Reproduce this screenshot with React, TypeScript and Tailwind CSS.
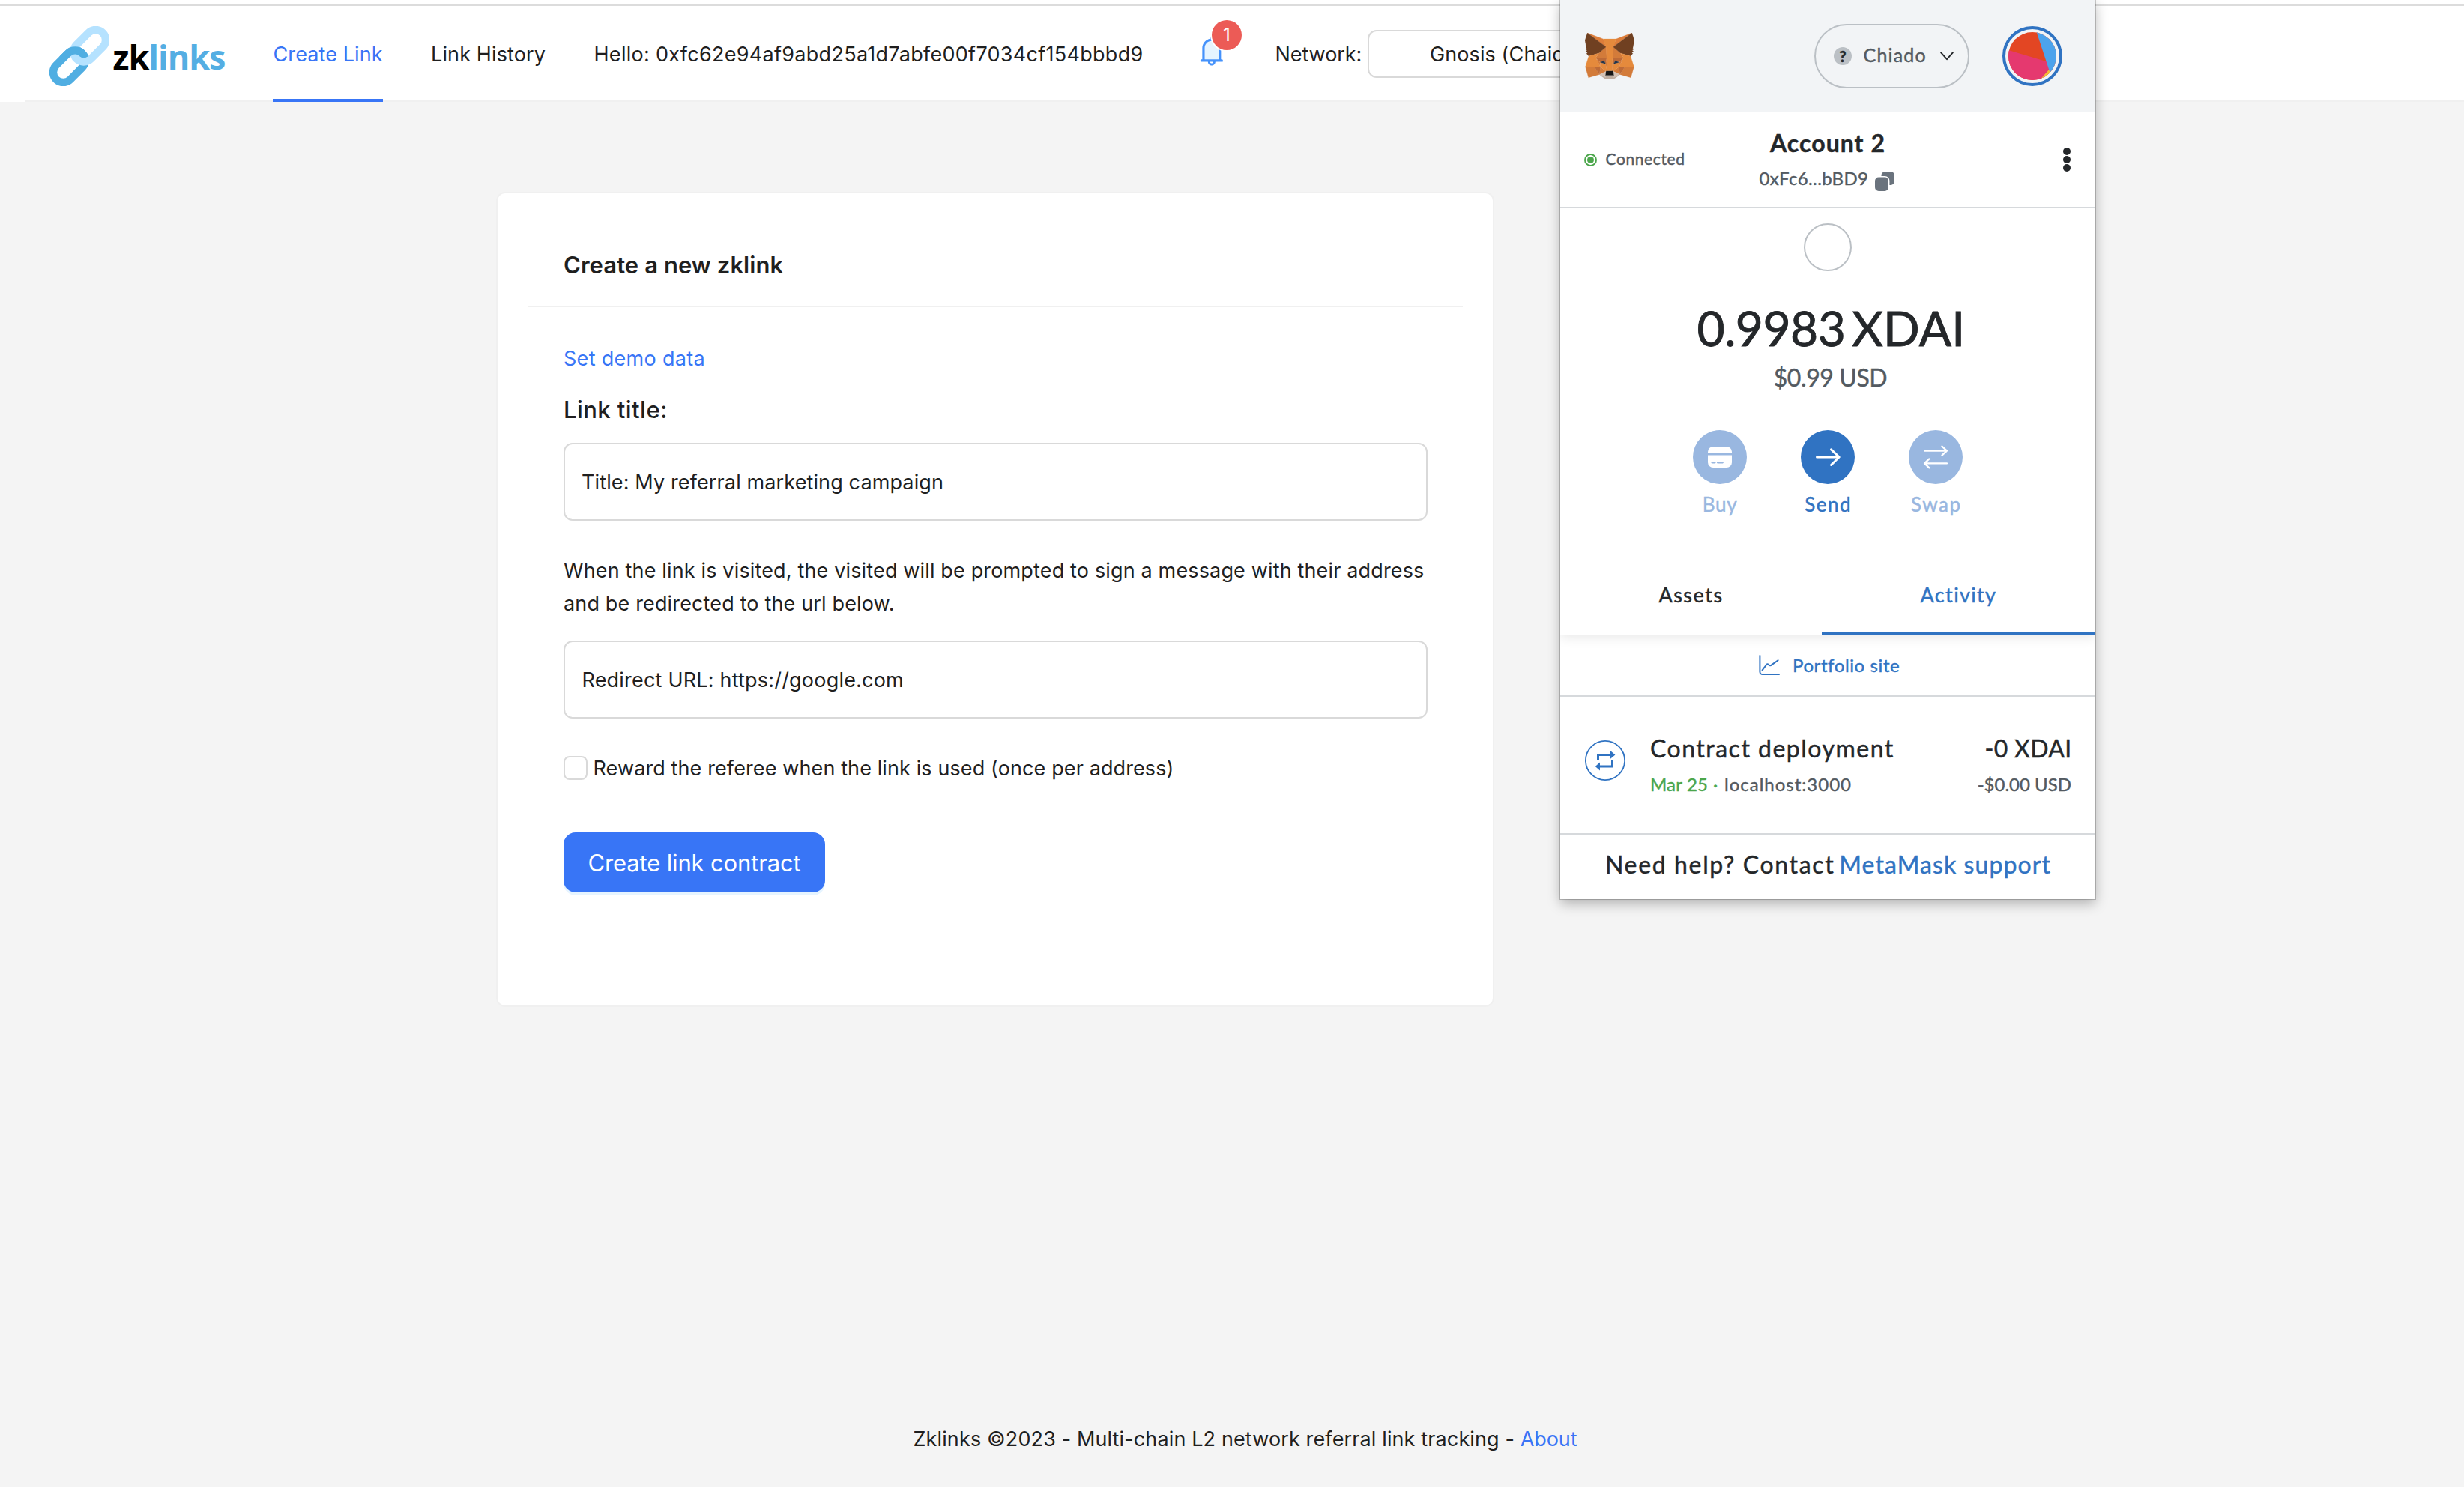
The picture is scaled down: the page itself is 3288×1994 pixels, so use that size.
const foxShapes: [string, string][] = [
  ['#dd7d3a', '274.1,35.5 174.6,109.4 193,65.8'],
  ['#dd7d3a', '44.4,35.5 143.1,110.1 125.6,65.8'],
  ['#d37b3a', '238.3,206.8 211.8,247.4 268.5,263 284.8,207.7'],
  ['#d37b3a', '33.9,207.7 50.1,263 106.8,247.4 80.3,206.8'],
  ['#d37b3a', '103.6,138.2 87.8,162.1 144.1,164.6 142.1,104.1'],
  ['#d37b3a', '214.9,138.2 175.9,103.4 174.6,164.6 230.8,162.1'],
  ['#d37b3a', '106.8,247.4 140.6,230.9 111.4,208.1'],
  ['#d37b3a', '177.9,230.9 211.8,247.4 207.1,208.1'],
  ['#d4c2b5', '211.8,247.4 177.9,230.9 180.6,253 180.3,262.3'],
  ['#d4c2b5', '106.8,247.4 138.3,262.3 138.1,253 140.6,230.9'],
  ['#bd6a37', '106.8,247.4 111.6,206.8 80.3,207.7'],
  ['#bd6a37', '207,206.8 211.8,247.4 238.3,207.7'],
  ['#bd6a37', '230.8,162.1 174.6,164.6 179.8,193.5 188.1,176.1 208.1,185.2'],
  ['#bd6a37', '110.6,185.2 130.6,176.1 138.8,193.5 144.1,164.6 87.8,162.1'],
  ['#d37b3a', '87.8,162.1 111.4,208.1 110.6,185.2'],
  ['#d37b3a', '208.1,185.2 207.1,208.1 230.8,162.1'],
  ['#d37b3a', '144.1,164.6 138.8,193.5 145.4,227.6 146.9,182.7'],
  ['#d37b3a', '174.6,164.6 171.9,182.6 173.1,227.6 179.8,193.5'],
  ['#e58a3c', '179.8,193.5 173.1,227.6 177.9,230.9 207.1,208.1 208.1,185.2'],
  ['#e58a3c', '110.6,185.2 111.4,208.1 140.6,230.9 145.4,227.6 138.8,193.5'],
  ['#283447', '138.8,193.5 110.6,185.2 130.5,176.1'],
  ['#283447', '179.7,193.5 188,176.1 208,185.2'],
  ['#beada0', '180.3,262.3 180.6,253 178.1,250.8 140.4,250.8 138.1,253 138.3,262.3 106.8,247.4 117.8,256.4 140.1,271.9 178.4,271.9 200.8,256.4 211.8,247.4'],
  ['#161616', '177.9,230.9 173.1,227.6 145.4,227.6 140.6,230.9 138.1,253 140.4,250.8 178.1,250.8 180.6,253'],
  ['#704021', '278.3,114.2 286.8,73.4 274.1,35.5 177.9,106.9 214.9,138.2 267.2,153.5 278.8,140 273.8,136.4 281.8,129.1 275.6,124.3 283.6,118.2'],
  ['#704021', '31.8,73.4 40.3,114.2 34.9,118.2 42.9,124.3 36.8,129.1 44.8,136.4 39.8,140 51.3,153.5 103.6,138.2 140.6,106.9 44.4,35.5'],
  ['#e58a3c', '267.2,153.5 214.9,138.2 230.8,162.1 207.1,208.1 238.3,207.7 284.8,207.7'],
  ['#e58a3c', '103.6,138.2 51.3,153.5 33.9,207.7 80.3,207.7 111.4,208.1 87.8,162.1'],
  ['#e58a3c', '174.6,164.6 177.9,106.9 193.1,65.8 125.6,65.8 140.6,106.9 144.1,164.6 145.3,182.8 145.4,227.6 173.1,227.6 173.3,182.8'],
];

function Fox() {
  return (
    <svg width="66" height="62" viewBox="31.8 35.5 255 236.4" preserveAspectRatio="none">
      {foxShapes.map(([fill, points]) => (
        <polygon key={points} points={points} fill={fill} stroke={fill} strokeWidth="0.8" strokeLinejoin="round" />
      ))}
    </svg>
  );
}

function LinkLogo() {
  return (
    <svg className="mt-[27px] shrink-0" width="80" height="80" viewBox="0 0 80 80" fill="none">
      <clipPath id="over">
        <rect x="0" y="0" width="80" height="40.5" />
      </clipPath>
      <g strokeWidth="10.4">
        <rect x="-24.6" y="-13.4" width="49.2" height="26.8" rx="13.4" transform="translate(26.3 53.7) rotate(-45)" stroke="#50aee2" />
        <rect x="-24.6" y="-13.4" width="49.2" height="26.8" rx="13.4" transform="translate(53.7 26.3) rotate(-45)" stroke="#b5e2ff" />
        <g clipPath="url(#over)">
          <rect x="-24.6" y="-13.4" width="49.2" height="26.8" rx="13.4" transform="translate(26.3 53.7) rotate(-45)" stroke="#50aee2" />
        </g>
      </g>
    </svg>
  );
}

function Bell() {
  return (
    <svg className="absolute -left-[8px] top-[36.5px]" width="45.7" height="45.7" viewBox="0 0 1024 1024">
      <path fill="#e6f4ff" d="M512 220c-55.6 0-107.8 21.6-147.1 60.9S304 372.4 304 428v340h416V428c0-55.6-21.6-107.8-60.9-147.1S567.6 220 512 220z" />
      <path
        fill="#4592fb"
        d="M816 768h-24V428c0-141.1-104.3-257.7-240-277.1V112c0-22.1-17.9-40-40-40s-40 17.9-40 40v38.9c-135.7 19.4-240 136-240 277.1v340h-24c-17.7 0-32 14.3-32 32v32c0 4.4 3.6 8 8 8h216c0 61.8 50.2 112 112 112s112-50.2 112-112h216c4.4 0 8-3.6 8-8v-32c0-17.7-14.3-32-32-32zM512 888c-26.5 0-48-21.5-48-48h96c0 26.5-21.5 48-48 48zm208-120H304V428c0-55.6 21.6-107.8 60.9-147.1S456.4 220 512 220c55.6 0 107.8 21.6 147.1 60.9S720 372.4 720 428v340z"
      />
    </svg>
  );
}

function Header() {
  return (
    <header className="flex h-32 shrink-0 bg-white text-[27px] leading-[33px] text-[#1f1f1f]">
      <div className="w-[34px] shrink-0" />
      <div className="flex grow border-b-2 border-[#f0f0f0]">
        <div className="ml-8 flex w-[298px] shrink-0">
          <LinkLogo />
          <div className="ml-[4.5px] mt-[37px] whitespace-nowrap font-['Open_Sans'] text-[45px] font-bold leading-[61px] tracking-[-1.05px] text-[#54aee3]">
            <span className="text-black">zk</span>links
          </div>
        </div>
        <a className="-mb-0.5 w-[147px] shrink-0 whitespace-nowrap border-b-4 border-[#3875f6] pl-[0.5px] pt-12 tracking-[0.1px] text-[#3875f6]">Create Link</a>
        <a className="ml-[64px] w-[154px] shrink-0 whitespace-nowrap pt-12 tracking-[0.13px]">Link History</a>
        <span className="ml-[63.5px] w-[735px] shrink-0 whitespace-nowrap pt-12 tracking-[0.286px]">
          Hello: 0xfc62e94af9abd25a1d7abfe00f7034cf154bbbd9
        </span>
        <div className="relative ml-[74.5px] w-[30px] shrink-0">
          <Bell />
          <span className="absolute left-[15px] top-[19px] flex size-10 items-center justify-center rounded-full bg-[#ec5b56] text-[24px] leading-6 text-white ring-2 ring-white">
            1
          </span>
        </div>
        <span className="ml-[69.5px] w-[120px] shrink-0 whitespace-nowrap pt-12 tracking-[-0.07px]">Network:</span>
        <div className="ml-[3.5px] mt-8 h-16 w-[400px] shrink-0 rounded-xl border-2 border-[#d9d9d9] pl-[81px] pt-[14px] tracking-[0.1px]">
          Gnosis (Chaido)
        </div>
      </div>
    </header>
  );
}

function LinkForm() {
  return (
    <section className="ml-[662px] mt-[120px] h-[1088px] w-[1332px] rounded-xl border-2 border-[#f0f0f0] bg-white px-10 pt-[77px]">
      <div className="border-b-2 border-[#f0f0f0] pb-9 pl-12">
        <h1 className="text-[31px] font-semibold leading-[37px] tracking-[0.065px]">Create a new zklink</h1>
      </div>
      <div className="w-[1201px] pl-12 pt-[52px] text-[27px] leading-[33px]">
        <a className="block tracking-[0.3px] text-[#3875f6]">Set demo data</a>
        <h2 className="mt-[33px] text-[31px] font-medium leading-[37px] tracking-[0.45px]">Link title:</h2>
        <div className="mt-[26px] flex h-[104px] items-center rounded-xl border-2 border-[#d9d9d9] pl-[22px] tracking-[0.123px]">
          Title: My referral marketing campaign
        </div>
        <p className="mt-[45px] whitespace-nowrap leading-[44px] tracking-[0.15px]">
          When the link is visited, the visited will be prompted to sign a message with their address
          <br />
          and be redirected to the url below.
        </p>
        <div className="mt-[27px] flex h-[104px] items-center rounded-xl border-2 border-[#d9d9d9] pl-[22.5px] tracking-[0.2px]">
          Redirect URL: https://google.com
        </div>
        <label className="mt-[50px] flex h-8 gap-[7.5px]">
          <span className="size-8 shrink-0 rounded-lg border-2 border-[#d9d9d9]" />
          <span className="whitespace-nowrap tracking-[0.11px]">Reward the referee when the link is used (once per address)</span>
        </label>
        <button className="mt-[70px] flex h-20 w-[349px] items-center justify-center rounded-2xl bg-[#3875f6] text-[31px] leading-[37px] tracking-[-0.148px] text-white shadow-[0_4px_0_rgba(5,145,255,0.1)]">
          Create link contract
        </button>
      </div>
    </section>
  );
}

function WalletHeader() {
  return (
    <div className="flex h-[150px] shrink-0 items-center bg-[#f2f4f6] pl-[33px]">
      <Fox />
      <div className="ml-[240px] flex h-[86px] w-[207px] items-center rounded-full border-2 border-[#bbc0c5] pl-6">
        <span className="flex size-6 items-center justify-center rounded-full bg-[#bbc0c5] text-[20px] font-black leading-6 text-[#24272a]">?</span>
        <span className="mb-1 ml-[15.5px] text-[25px] leading-[30px] tracking-[1.18px] text-[#535a61]">Chiado</span>
        <svg className="ml-[18px]" width="18" height="12" viewBox="0 0 18 12" fill="none" stroke="#24272a" strokeWidth="1.9" strokeLinecap="round" strokeLinejoin="round">
          <path d="M1.2 1.4 9 10.2l7.8-8.8" />
        </svg>
      </div>
      <div className="ml-[44px] flex size-20 items-center justify-center rounded-full border-4 border-[#3073c2]">
        <svg width="64" height="64" viewBox="0 0 64 64">
          <clipPath id="avatar">
            <circle cx="32" cy="32" r="32" />
          </clipPath>
          <g clipPath="url(#avatar)">
            <rect width="64" height="64" fill="#e34623" />
            <path d="M0 24 52 39.5 64 64H0Z" fill="#e5396f" />
            <path d="M55 49 40 66h24Z" fill="#f3be35" />
            <path d="M37 -2 55.5 54 66 52V-2Z" fill="#4ca3ec" />
          </g>
        </svg>
      </div>
    </div>
  );
}

function AccountBar() {
  return (
    <div className="grid h-32 shrink-0 grid-cols-[1fr_auto_1fr] border-b-2 border-[#d6d9dc]">
      <div className="flex items-center pl-[31.5px]">
        <span className="flex size-[17px] items-center justify-center rounded-full border-2 border-[#4ca64c]">
          <span className="size-[9px] rounded-full bg-[#4ca64c]" />
        </span>
        <span className="mb-[3px] ml-[12px] text-[21px] leading-[25px] tracking-[0.6px] text-[#535a61]">Connected</span>
      </div>
      <div className="flex flex-col items-center pt-[21px]">
        <span className="text-[32px] font-bold leading-[39px] tracking-[1.05px] text-[#24272a]">Account 2</span>
        <div className="mr-[2px] mt-[13px] flex">
          <span className="text-[24px] leading-[29px] tracking-[0.36px] text-[#535a61]">0xFc6...bBD9</span>
          <svg className="ml-[9px] mt-[6px]" width="26" height="26" viewBox="0 0 26 26" fill="#6a737d">
            <rect x="8.5" y="0" width="17.5" height="18" rx="5" />
            <rect x="-1.6" y="6" width="21" height="21.5" rx="6" fill="#ffffff" />
            <rect x="0" y="7.6" width="18" height="18.4" rx="5" />
          </svg>
        </div>
      </div>
      <div className="flex flex-col items-end justify-center gap-[1.6px] pr-[33px]">
        <span className="size-[9.6px] rounded-full bg-[#24272a]" />
        <span className="size-[9.6px] rounded-full bg-[#24272a]" />
        <span className="size-[9.6px] rounded-full bg-[#24272a]" />
      </div>
    </div>
  );
}

function Actions() {
  return (
    <div className="mt-[51px] flex gap-[72px] text-[26px] leading-8 text-[#99b7e0]">
      <div className="flex w-[72px] flex-col items-center gap-[11px]">
        <svg width="72" height="72" viewBox="0 0 72 72">
          <circle cx="36" cy="36" r="36" fill="#99b7e0" />
          <path d="M20 31v-2a7 7 0 0 1 7-7h18a7 7 0 0 1 7 7v2Z" fill="#fff" />
          <path d="M20 33.4h32V43a7 7 0 0 1-7 7H27a7 7 0 0 1-7-7Z" fill="#fff" />
          <path d="M25.5 43.3h4M33 43.3h6.8" stroke="#99b7e0" strokeWidth="2.2" strokeLinecap="round" />
        </svg>
        <span className="tracking-[0.7px]">Buy</span>
      </div>
      <div className="flex w-[72px] flex-col items-center gap-[11px] text-[#3073c2]">
        <svg width="72" height="72" viewBox="0 0 72 72" fill="none" stroke="#fff" strokeWidth="3" strokeLinecap="round" strokeLinejoin="round">
          <circle cx="36" cy="36" r="36" fill="#3073c2" stroke="none" />
          <path d="M21.5 36h29.5M40.5 25.8 51.2 36 40.5 46.5" />
        </svg>
        <span className="pl-[1.5px] tracking-[1.5px]">Send</span>
      </div>
      <div className="flex w-[72px] flex-col items-center gap-[11px]">
        <svg width="72" height="72" viewBox="0 0 72 72" fill="none" stroke="#fff" strokeWidth="2.2" strokeLinecap="round" strokeLinejoin="round">
          <circle cx="36" cy="36" r="36" fill="#99b7e0" stroke="none" />
          <path d="M21 27.6h30M44.4 21.6l6.6 6-6.6 6M51 44.4H21M27.4 38.4l-6.4 6 6.4 6" />
        </svg>
        <span className="pl-[1.5px] tracking-[1.5px]">Swap</span>
      </div>
    </div>
  );
}

function Transaction() {
  return (
    <div className="flex h-[182px] shrink-0 px-[33px]">
      <svg className="mt-[58px]" width="54" height="54" viewBox="0 0 54 54" fill="none">
        <circle cx="27" cy="27" r="26.1" stroke="#3073c2" strokeWidth="1.8" />
        <path d="M17.5 27v-7.6H35M36.5 26.4V35H19" stroke="#3073c2" strokeWidth="3" />
        <path d="M34 14l6.4 5.4-6.4 5.4ZM20 29.6l-6.2 5.4 6.2 5.4Z" fill="#3073c2" />
      </svg>
      <div className="ml-[33px] pt-[49px]">
        <div className="whitespace-nowrap text-[32px] leading-[39px] tracking-[1.5px] text-[#24272a]">Contract deployment</div>
        <div className="mt-[14px] flex text-[24px] leading-[29px] text-[#535a61]">
          <span className="w-[84px] tracking-[0.17px] text-[#4ca64c]">Mar 25</span>
          <span className="w-[15px] text-[#4ca64c]">·</span>
          <span className="tracking-[1px]">localhost:3000</span>
        </div>
      </div>
      <div className="ml-auto flex flex-col items-end pt-[49px]">
        <div className="-mr-[1.5px] text-[32px] leading-[39px] tracking-[0.33px] text-[#24272a]">-0 XDAI</div>
        <div className="-mr-px mt-[14px] text-[24px] leading-[29px] text-[#535a61]">-$0.00 USD</div>
      </div>
    </div>
  );
}

function Wallet() {
  return (
    <aside className="absolute left-[2082px] top-0 flex h-[1200px] w-[714px] flex-col whitespace-nowrap bg-white font-['Lato'] shadow-[0_0_0_1px_rgba(0,0,0,0.2),0_6px_16px_rgba(0,0,0,0.28)] [-webkit-text-stroke:0.45px_currentColor]">
      <WalletHeader />
      <AccountBar />
      <div className="flex h-[465px] shrink-0 flex-col items-center pt-5">
        <span className="size-16 shrink-0 rounded-full border-2 border-[#bbc0c5]" />
        <div className="mt-[37px] flex gap-[9px] pl-[9px] text-[64px] leading-[77px] text-[#24272a] [-webkit-text-stroke:0.9px_currentColor]">
          <span className="tracking-[-0.5px]">0.9983</span>
          <span className="tracking-[0.24px]">XDAI</span>
        </div>
        <div className="mt-2 pl-[7px] text-[32px] leading-[39px] tracking-[-0.4px] text-[#535a61]">$0.99 USD</div>
        <Actions />
      </div>
      <div className="relative flex h-[105px] shrink-0 bg-white text-center text-[27px] leading-[33px] shadow-[0_2px_16px_rgba(0,0,0,0.1)] [clip-path:inset(0_0_-24px_0)]">
        <div className="w-[349px] pt-[34px] tracking-[1.5px] text-[#24272a]">Assets</div>
        <div className="w-[365px] border-b-4 border-[#3073c2] pt-[34px] tracking-[1.35px] text-[#3073c2]">Activity</div>
      </div>
      <div className="flex h-[82px] shrink-0 gap-[17.5px] border-b-2 border-[#d6d9dc] pl-[264.5px] pt-[25px] text-[24px] leading-[29px] tracking-[0.6px] text-[#3073c2]">
        <svg className="mt-px" width="28" height="28" viewBox="0 0 28 28" fill="none" stroke="#3073c2" strokeWidth="2" strokeLinecap="round" strokeLinejoin="round">
          <path d="M1.4 1v21.5a3.6 3.6 0 0 0 3.6 3.6h22M4.6 20.4l5.6-7.4c.8-1 1.8-.8 2.6 0 1.4 1.4 2.8 2 4.2.4L25.6 7.2" />
        </svg>
        Portfolio site
      </div>
      <Transaction />
      <div className="border-t-2 border-[#d6d9dc] pl-[60px] pt-5 text-[32px] leading-[39px] tracking-[1.65px] text-[#24272a]">
        Need help? Contact<span className="inline-block w-[6px]" />
        <a className="tracking-[1.09px] text-[#3073c2]">MetaMask support</a>
      </div>
    </aside>
  );
}

export default function App() {
  return (
    <div className="relative flex h-[1994px] w-[3288px] flex-col overflow-hidden bg-white font-['Inter'] text-[#1f1f1f]">
      <div className="h-2 shrink-0 border-b-2 border-[#dcdcdc]" />
      <Header />
      <main className="flex h-[1848px] shrink-0 flex-col bg-[#f4f4f4]">
        <LinkForm />
        <footer className="mt-auto pb-[47px] pl-[35px] text-center text-[27px] leading-[33px] tracking-[0.127px]">
          Zklinks ©2023 - Multi-chain L2 network referral link tracking - <a className="tracking-[-0.08px] text-[#3875f6]">About</a>
        </footer>
      </main>
      <Wallet />
    </div>
  );
}
